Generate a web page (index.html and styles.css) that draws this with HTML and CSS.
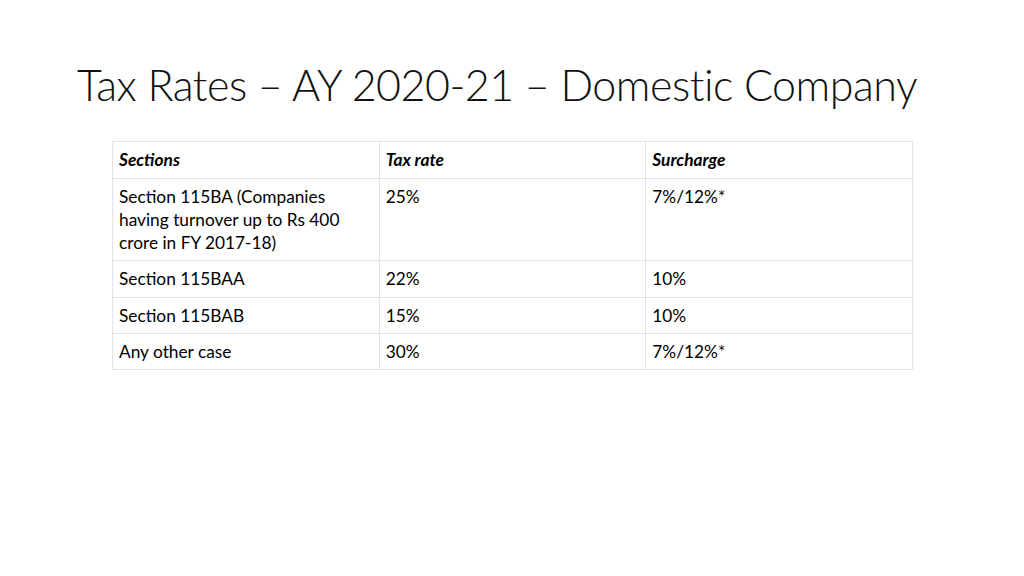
FILE: index.html
```html
<!DOCTYPE html>
<html>
<head>
<meta charset="utf-8">
<link rel="stylesheet" href="styles.css">
</head>
<body>
<div class="slide">
  <h1 class="title">Tax Rates – AY 2020-21 – Domestic Company</h1>
  <table class="rates">
    <colgroup><col class="c1"><col class="c2"><col class="c3"></colgroup>
    <thead>
      <tr class="r37"><th>Sections</th><th>Tax rate</th><th>Surcharge</th></tr>
    </thead>
    <tbody>
      <tr class="r82"><td>Section 115BA (Companies having turnover up to Rs 400 crore in FY 2017-18)</td><td>25%</td><td>7%/12%*</td></tr>
      <tr class="r37"><td>Section 115BAA</td><td>22%</td><td>10%</td></tr>
      <tr class="r36"><td>Section 115BAB</td><td>15%</td><td>10%</td></tr>
      <tr class="r36"><td>Any other case</td><td>30%</td><td>7%/12%*</td></tr>
    </tbody>
  </table>
</div>
</body>
</html>
```
FILE: styles.css
```css
html, body {
  margin: 0;
  padding: 0;
  background: #ffffff;
}
.slide {
  width: 1024px;
  height: 576px;
  box-sizing: border-box;
  padding: 57px 0 0 112px;
  font-family: Lato, "Open Sans", sans-serif;
  color: #000;
}
.title {
  margin: 0 0 0 -35px;
  font-weight: 300;
  font-size: 43px;
  line-height: 56px;
  letter-spacing: -0.5px;
  white-space: nowrap;
  color: #111;
}
.rates {
  margin-top: 28px;
  border-collapse: collapse;
  width: 800px;
  table-layout: fixed;
  font-size: 17.3px;
  line-height: 23px;
}
.rates col { width: 266.67px; }
.rates th, .rates td {
  border: 1px solid #e2e2e2;
  padding: 6px 6px 5px 6px;
  text-align: left;
  vertical-align: top;
}
.r37 { height: 37px; }
.r36 { height: 36px; }
.r82 { height: 82px; }
.rates th {
  font-style: italic;
  font-weight: 700;
}
.rates td { font-weight: 400; }
```
